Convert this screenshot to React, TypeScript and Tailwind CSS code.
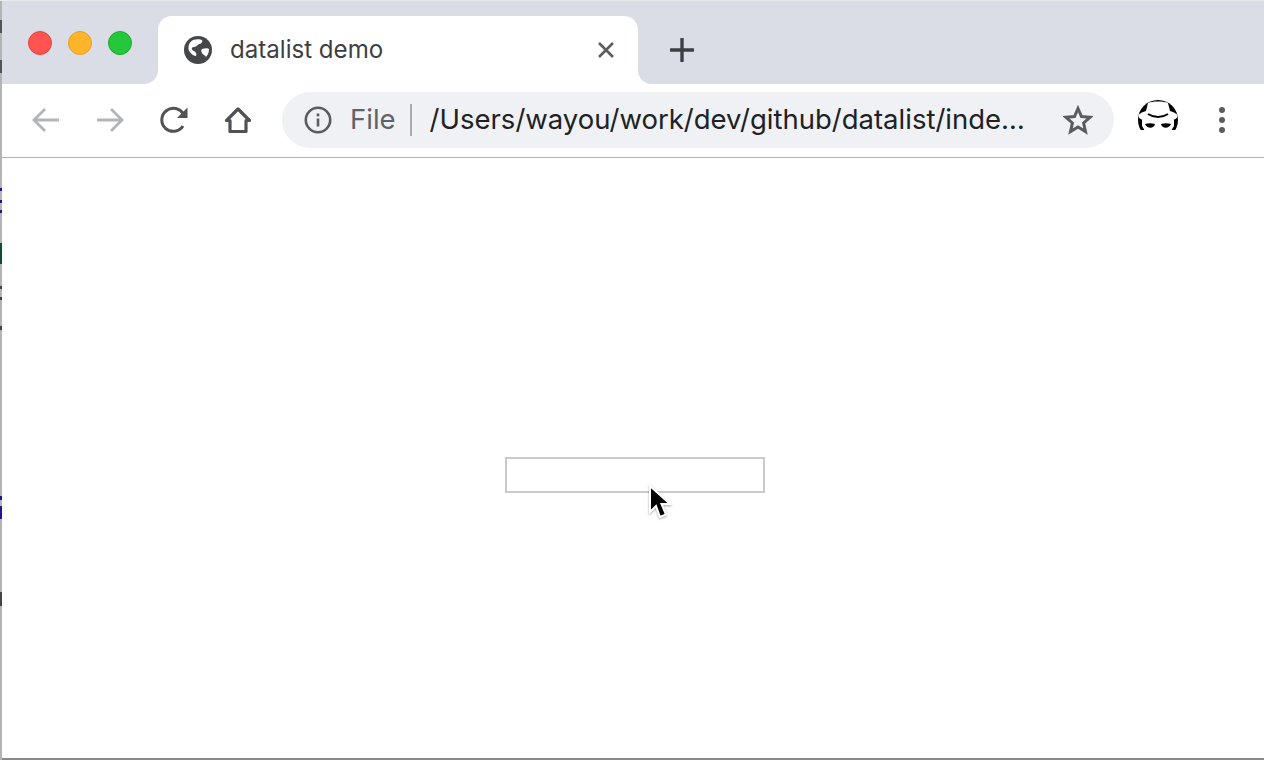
import React from 'react';

const font = { fontFamily: 'Inter, "Noto Sans", sans-serif' };

const Specks: React.FC = () => (
  <>
    {/* bits of the window behind, on the left edge */}
    <div className="absolute left-0 top-[20px] h-[13px] w-[2px] bg-[#555]" />
    <div className="absolute left-0 top-[60px] h-[13px] w-[2px] bg-[#555]" />
    <div className="absolute left-0 top-[188px] h-[3px] w-[2px] bg-[#1a1a8c]" />
    <div className="absolute left-0 top-[200px] h-[3px] w-[2px] bg-[#1a1a8c]" />
    <div className="absolute left-0 top-[210px] h-[3px] w-[2px] bg-[#1a1a8c]" />
    <div className="absolute left-0 top-[243px] h-[21px] w-[2px] bg-[#0d4f2a]" />
    <div className="absolute left-0 top-[286px] h-[3px] w-[2px] bg-[#444]" />
    <div className="absolute left-0 top-[297px] h-[3px] w-[2px] bg-[#444]" />
    <div className="absolute left-0 top-[326px] h-[4px] w-[2px] bg-[#444]" />
    <div className="absolute left-0 top-[496px] h-[4px] w-[2px] bg-[#1a1a8c]" />
    <div className="absolute left-0 top-[506px] h-[13px] w-[2px] bg-[#1a1a8c]" />
    <div className="absolute left-0 top-[592px] h-[14px] w-[2px] bg-[#444]" />
  </>
);

const TrafficLight: React.FC<{ className: string }> = ({ className }) => (
  <div className={`h-6 w-6 rounded-full border ${className}`} />
);

const App: React.FC = () => {
  return (
    <div className="relative flex h-[760px] w-[1264px] flex-col overflow-hidden bg-white" style={font}>
      {/* Tab strip */}
      <div className="flex h-[84px] shrink-0">
        <div className="flex w-[158px] items-start gap-4 rounded-br-[14px] bg-[#dadde5] pl-[28px] pt-[31px]">
          <TrafficLight className="border-[#e0443e] bg-[#ff5450]" />
          <TrafficLight className="border-[#dea123] bg-[#ffb429]" />
          <TrafficLight className="border-[#1aab29] bg-[#25c73b]" />
        </div>
        <div className="w-[480px] bg-[#dadde5] pt-4">
          <div className="flex h-[68px] items-center rounded-t-[14px] bg-white pl-[26px] pr-[22px]">
            <svg width="28" height="28" viewBox="0 0 28 28" className="shrink-0">
              <circle cx="14" cy="14" r="14" fill="#45474b" />
              <path d="M9 4c3-1 7-1 9 0 1 2-1 4-3 4-2 1-3 3-5 3-3 0-3 3 0 4 2 1 3 3 2 5-2 0-5-2-7-5-1-3-1-8 4-11zM18 13c3-1 6-1 7 0 0 3-1 6-3 8-1-2-3-2-4-4-1-2-1-3 0-4z" fill="#fff" />
            </svg>
            <span className="ml-[18px] flex-1 text-[24.1px] leading-none text-[#3c4043]">datalist demo</span>
            <svg width="20" height="20" viewBox="0 0 20 20" className="shrink-0">
              <path d="M3 3l14 14M17 3L3 17" stroke="#5a5c60" strokeWidth="2.6" />
            </svg>
          </div>
        </div>
        <div className="flex flex-1 items-start rounded-bl-[14px] bg-[#dadde5] pl-[32px] pt-[38px]">
          <svg width="24" height="24" viewBox="0 0 24 24">
            <path d="M12 1v22M1 12h22" stroke="#3c4043" strokeWidth="3.4" strokeLinecap="round" />
          </svg>
        </div>
      </div>

      {/* Toolbar */}
      <div className="flex h-[74px] shrink-0 items-start border-b border-[#b3b3b3] pl-[14px] pt-2">
        <div className="flex h-14 w-16 items-center justify-center pr-[2px]">
          <svg width="28" height="26" viewBox="0 0 28 26" fill="none" stroke="#b4b5b7" strokeWidth="2.8">
            <path d="M28 13H3M14 2L3 13l11 11" />
          </svg>
        </div>
        <div className="flex h-14 w-16 items-center justify-center pl-[2px]">
          <svg width="28" height="26" viewBox="0 0 28 26" fill="none" stroke="#b4b5b7" strokeWidth="2.8">
            <path d="M0 13h25M14 2l11 11-11 11" />
          </svg>
        </div>
        <div className="flex h-14 w-16 items-center justify-center">
          <svg width="28" height="28" viewBox="0 0 28 28" fill="none">
            <path d="M23 20a11.5 11.5 0 1 1 .5-11.5" stroke="#505256" strokeWidth="3" />
            <path d="M27.500 1.500V12H17z" fill="#505256" />
          </svg>
        </div>
        <div className="flex h-14 w-16 items-center justify-center">
          <svg width="28" height="28" viewBox="0 0 28 28" fill="none">
            <path d="M14 3L2.500 14.500H6V25.500H22V14.500H25.500z" stroke="#505256" strokeWidth="3.2" strokeLinejoin="round" />
          </svg>
        </div>

        {/* Address bar */}
        <div className="ml-[12px] flex h-14 w-[832px] items-center rounded-full bg-[#eff1f5] pl-[22px] pr-[21px]">
          <svg width="28" height="28" viewBox="0 0 28 28" fill="none" className="shrink-0">
            <circle cx="14" cy="14" r="12.200" stroke="#5a5c60" strokeWidth="2.600" />
            <rect x="12.700" y="12.500" width="2.600" height="8" fill="#5a5c60" />
            <rect x="12.700" y="7.500" width="2.600" height="2.800" fill="#5a5c60" />
          </svg>
          <span className="ml-[18px] text-[27.5px] leading-none text-[#5f6368]">File</span>
          <div className="ml-[14px] h-[32px] w-[2px] shrink-0 bg-[#a9abae]" />
          <span className="ml-[18px] flex-1 whitespace-nowrap text-[27.5px] leading-none text-[#202124]">
            /Users/wayou/work/dev/github/datalist/inde…
          </span>
          <svg width="30" height="30" viewBox="0 0 30 30" fill="none" className="shrink-0">
            <path d="M15 3.500l3.500 8 8.500.8-6.400 5.700 1.900 8.500L15 21.900 7.500 26.500l1.900-8.500L3 12.300l8.500-.8z" stroke="#5a5c60" strokeWidth="3" strokeLinejoin="miter" />
          </svg>
        </div>

        {/* Incognito */}
        <div className="ml-[12px] flex h-14 w-16 items-center justify-center">
          <svg width="40" height="40" viewBox="0 0 40 40">
            <circle cx="20" cy="20" r="20" fill="#000" />
            <path d="M0 30h40v10H0z" fill="#fff" />
            <path d="M4 20h32v6l-3 5H7l-3-5z" fill="#fff" />
            <path d="M10 3C14 1 26 1 30 3L32 11C36 12 39.500 14 39.500 16 39.500 20 30 22 20 22 10 22 .5 20 .5 16 .5 14 4 12 8 11z" fill="#fff" />
            <path d="M10 14c6 4 14 4 20 0" fill="none" stroke="#000" strokeWidth="2" />
            <path d="M7 24c3-1 7-1 10 0-1 5-8 5-10 0zM23 24c3-1 7-1 10 0-2 5-9 5-10 0z" fill="#000" />
          </svg>
        </div>
        <div className="flex h-14 w-16 flex-col items-center justify-center gap-[4px]">
          <div className="h-[6px] w-[6px] rounded-full bg-[#5a5c60]" />
          <div className="h-[6px] w-[6px] rounded-full bg-[#5a5c60]" />
          <div className="h-[6px] w-[6px] rounded-full bg-[#5a5c60]" />
        </div>
      </div>

      {/* Page */}
      <div className="flex-1 border-b-2 border-[#8a8a8a] pl-[505px] pt-[299px]">
        <input className="block h-[36px] w-[260px] border-2 border-[#cacaca] bg-white outline-none" />
      </div>

      {/* Window edge */}
      <div className="absolute inset-y-0 left-0 w-[2px] bg-[#b4b4b4]" />
      <Specks />
      <div className="absolute inset-x-0 top-0 h-[1px] bg-[#e8eaee]" />

      {/* Mouse pointer */}
      <svg width="26" height="38" viewBox="0 0 26 38" className="absolute left-[646px] top-[484px]" style={{ filter: 'drop-shadow(0 1px 1px rgba(0,0,0,.35))' }}>
        <path d="M4 2v26l6-6 4 11 6-2.500-4.500-10.500h8.500z" fill="#000" stroke="#fff" strokeWidth="2" />
      </svg>
    </div>
  );
};

export default App;
